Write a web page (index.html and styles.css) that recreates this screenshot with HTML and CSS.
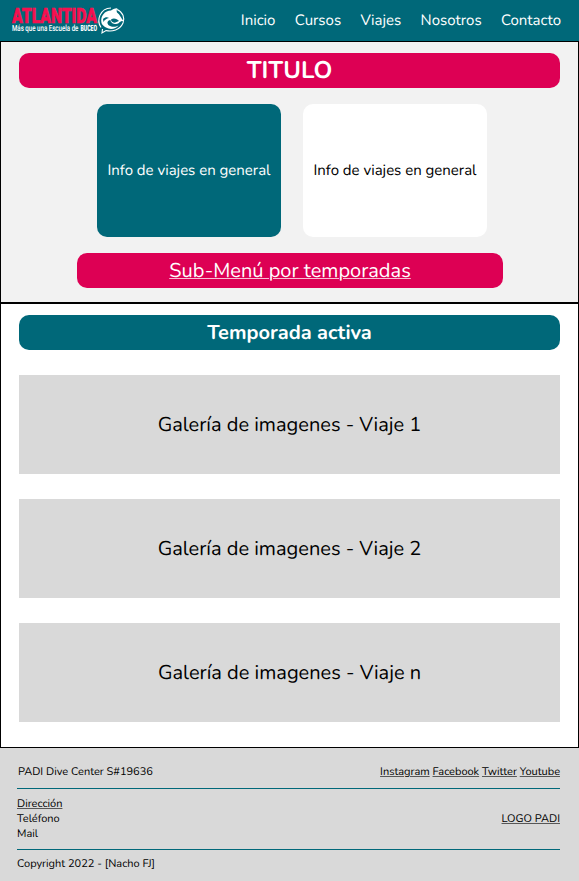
FILE: index.html
```html
<!DOCTYPE html>
<html lang="es">
<head>
<meta charset="utf-8">
<title>Atlantida - Viajes</title>
<link rel="stylesheet" href="styles.css">
</head>
<body>
<header class="header">
  <svg class="logo" width="114" height="30" viewBox="0 0 114 30" role="img" aria-label="Atlantida">
    <text class="logo-name" transform="translate(0 17.7) scale(.5 1)" textLength="170" lengthAdjust="spacingAndGlyphs">ATLANTIDA</text>
    <text class="logo-tag" transform="translate(0 25.7) scale(.8 1)" textLength="83" lengthAdjust="spacingAndGlyphs">Más que una Escuela de</text>
    <text class="logo-tag logo-strong" transform="translate(68.5 25.7) scale(.7 1)" textLength="23.5" lengthAdjust="spacingAndGlyphs">BUCEO</text>
    <path d="M89 22.5 C84 15 88 3.5 99 3 M105 4.5 C111 7 113 13 111 18 C108 25 100 27 94 25.5 L90 28 L90.5 24" fill="none" stroke="#fff" stroke-width="1.1"/>
    <path d="M89.500 18 C88 11 93 5.500 99 5.500 C100.500 4 103 3 105.500 3.200 C104.500 4.500 104.500 6 105 7.500 C108 9.500 109 13 111.500 16 C108 15.500 107.500 18.500 104 19 C101 19 98.500 17.500 98.500 15 C95 15.500 94.500 18.500 97 20.500 C100 22.500 104 22 106.500 20.500 C104 24 98 25 94 22.500 C91.500 21 90 19.500 89.500 18Z" fill="#fff"/>
    <path d="M99 14.500 C102 12.500 105 14 107 16 C105 17 103 18 101.500 17.500 C100 17 99 16 99 14.500Z" fill="#006879"/>
    <path d="M91 14 C93 12 95.500 12 97 13 C94.500 13.500 92.500 15 91.500 17Z" fill="#006879"/>
  </svg>
  <nav class="nav">
    <a>Inicio</a><a>Cursos</a><a>Viajes</a><a>Nosotros</a><a>Contacto</a>
  </nav>
</header>
<section class="intro">
  <h1 class="bar title"><span>TITULO</span></h1>
  <div class="cards">
    <div class="card card-teal"><span>Info de viajes en general</span></div>
    <div class="card"><span>Info de viajes en general</span></div>
  </div>
  <div class="bar submenu"><a>Sub-Menú por temporadas</a></div>
</section>
<main class="season">
  <h2 class="bar season-title"><span>Temporada activa</span></h2>
  <div class="gallery"><span>Galería de imagenes - Viaje 1</span></div>
  <div class="gallery"><span>Galería de imagenes - Viaje 2</span></div>
  <div class="gallery"><span>Galería de imagenes - Viaje n</span></div>
</main>
<footer class="footer">
  <div class="row row-top">
    <span>PADI Dive Center S#19636</span>
    <div class="social"><a>Instagram</a> <a>Facebook</a> <a>Twitter</a> <a>Youtube</a></div>
  </div>
  <div class="row row-mid">
    <div class="contact"><a>Dirección</a><span>Teléfono</span><span>Mail</span></div>
    <a>LOGO PADI</a>
  </div>
  <div class="row copy"><span>Copyright 2022 - [Nacho FJ]</span></div>
</footer>
</body>
</html>
```
FILE: styles.css
```css
* { box-sizing: border-box; }
body {
  margin: 0;
  font-family: Nunito, Lato, sans-serif;
  color: #000;
  background: #fff;
  text-rendering: geometricPrecision;
}
.header {
  height: 41px;
  background: #006879;
  display: flex;
  justify-content: space-between;
  padding: 5px 18px 0 12px;
}
.logo { display: block; overflow: visible; }
.logo-name { font: 900 21px Roboto, sans-serif; fill: #f5104f; stroke: #f5104f; stroke-width: .6px; }
.logo-tag { font: 500 8.6px Roboto, sans-serif; fill: #fff; }
.logo-strong { font-weight: 900; }
.nav {
  display: flex;
  gap: 19.3px;
  font-size: 15px;
  line-height: 32px;
  color: #fff;
}
.intro {
  height: 262px;
  background: #f2f2f2;
  border: 1px solid #000;
  padding: 11px 18px 0;
}
.bar {
  margin: 0;
  height: 35px;
  border-radius: 10px;
  display: flex;
  align-items: center;
  justify-content: center;
  color: #fff;
  background: #dd0054;
}
.title { font-size: 24px; font-weight: 700; }
.cards {
  display: flex;
  gap: 22px;
  margin: 16px 0 16px 78px;
}
.card {
  width: 184px;
  height: 133px;
  border-radius: 10px;
  background: #fff;
  display: flex;
  align-items: center;
  justify-content: center;
  font-size: 15px;
}
.card-teal { background: #006879; color: #fff; }
.submenu {
  width: 426px;
  margin-left: 58px;
  font-size: 20px;
  padding-top: 1px;
}
.submenu a, .footer a { text-decoration: underline; text-decoration-thickness: 1px; }
.submenu a { text-decoration-color: rgba(255, 255, 255, .75); }
.footer a { text-decoration-color: rgba(0, 0, 0, .6); }
.season {
  height: 445px;
  border: 1px solid #000;
  padding: 11px 18px 0;
}
.season-title { background: #006879; font-size: 20px; font-weight: 700; padding-top: 1px; }
.gallery {
  height: 99px;
  margin-top: 25px;
  padding-top: 1px;
  background: #d9d9d9;
  display: flex;
  align-items: center;
  justify-content: center;
  font-size: 20px;
}
.footer {
  height: 133px;
  background: #d9d9d9;
  padding: 0 19px 0 17px;
  font-size: 11px;
  line-height: 15px;
}
.row { display: flex; justify-content: space-between; align-items: center; }
.row-top { height: 41px; padding: 7px 0 0 1px; border-bottom: 1px solid #006879; }
.row-mid { height: 61px; padding-bottom: 2px; border-bottom: 1px solid #006879; }
.contact { display: flex; flex-direction: column; align-items: flex-start; }
.copy { height: 29px; padding-bottom: 2px; }
```
